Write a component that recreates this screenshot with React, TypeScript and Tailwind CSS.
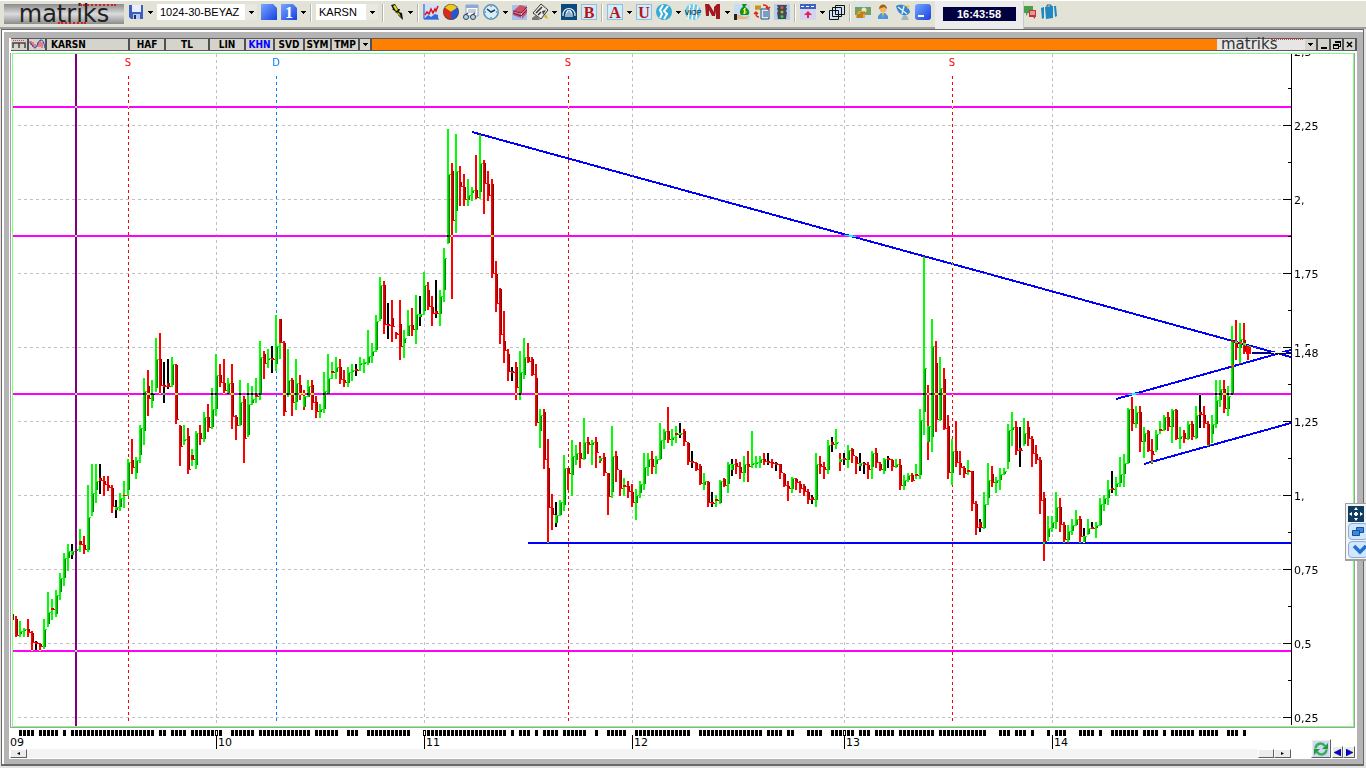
import React from 'react';

type Segment = { start: number; rows: string };

// Weekly bars, 4px apart. Each entry: colour of wick (+ body), high, low, body top, body bottom
const SEGMENTS: Segment[] = [
  {
    start: 16,
    rows: `r 616 637 619 636,g 621 637 631 634,g 628 637 629 631,r 619 637 629 633,r 631 651 633 643,
kr 641 650 642 644,r 643 651 644 647,g 619 649 629 647,g 592 627 612 624,gr 599 620 608 610,
g 590 617 595 614,g 573 600 578 592,g 553 586 558 578,g 544 571 551 558,kg 544 559 551 555,
g 549 551 549 551,gr 529 552 541 545,r 536 554 545 550,g 485 552 517 550,g 464 516 493 512,
g 464 503 481 490,kr 464 494 478 481,r 476 496 481 485,r 476 491 485 488,r 485 513 488 507,
kg 500 518 507 510,g 493 511 498 507,gr 481 508 495 496,g 459 496 462 490,r 439 474 460 468,
g 457 479 460 473,g 425 463 428 455,g 378 445 391 431,r 370 416 386 399,g 380 408 394 401,
g 338 392 359 388,r 333 394 359 386,kr 362 403 385 387,kr 359 389 383 387,g 357 387 364 385,
r 364 424 365 420,r 425 466 426 447,g 425 445 439 441,r 428 474 436 470,gr 449 466 455 460,
g 431 469 433 465,r 425 445 433 439,g 412 442 417 439,r 404 432 417 428,g 388 429 409 427,
g 354 416 375 409,r 364 387 375 383,r 359 394 383 391,g 378 394 383 393,r 364 429 383 417`,
  },
  {
    start: 236,
    rows: `r 415 440 417 426,g 380 426 402 425,r 396 463 399 439,g 383 437 404 435,g 386 405 399 403,
gr 378 403 395 397,g 341 400 357 395,r 351 379 354 364,g 349 368 358 360,kr 346 373 358 360,
g 315 371 346 364,gr 319 359 319 343,r 341 416 343 412,g 349 397 380 395,r 378 416 380 403,
g 359 410 383 402,r 375 400 385 394,rg 390 410 396 407,g 380 397 386 397,r 380 410 385 403,
r 396 418 402 412,g 404 418 409 412,g 372 413 391 409,g 354 394 378 394,gr 362 379 371 373,
g 357 379 367 372,r 359 384 367 380,r 370 387 380 383,g 367 387 372 383,g 364 381 370 372,
kr 364 376 369 371,g 357 371 363 365,g 359 373 362 364,g 330 365 356 363,g 343 363 351 356,
g 315 352 321 350,g 277 321 285 319,r 281 334 285 325,kr 303 339 324 326,r 300 342 318 327,
r 332 339 333 335,r 300 360 324 347,g 330 358 338 343,g 310 336 325 336,r 308 336 325 330,
g 295 344 314 330`,
  },
  {
    start: 420,
    rows: `kg 296 326 314 317,g 272 315 285 311,r 282 310 290 307,r 296 326 307 314,kr 280 318 311 314,
g 290 326 296 314,g 248 302 258 290,g 129 244 174 243,r 163 299 171 221,g 134 233 171 211,
r 166 206 182 187,r 174 206 187 200,g 179 206 195 200,g 187 201 190 193,r 155 199 190 198,
g 134 199 163 192,r 160 214 163 184,r 171 201 184 196,r 179 278 184 274,r 261 312 274 304,
r 288 344 289 335,r 311 363 341 351,r 349 381 354 372,kr 367 381 371 373,r 362 400 367 388,
g 351 400 372 393,g 338 379 357 375,r 343 363 357 362,r 357 376 359 375,r 364 426 378 423,
g 409 448 415 431,r 409 469 412 460,r 439 543 468 508,r 494 530 508 515,kg 502 527 515 523,
g 500 516 502 515,g 455 511 468 505,r 468 490 468 474,g 440 496 456 475,g 445 465 453 460,
r 442 468 453 459,g 418 460 442 459,r 437 454 442 445,g 440 465 442 445,r 437 468 442 453,
rg 456 463 458 461,r 453 476 457 473,r 473 515 473 497,g 426 498 456 492,r 451 482 456 470,
r 470 496 470 489,gr 478 496 485 487,r 481 498 486 492,r 484 507 492 503,g 489 520 495 503`,
  },
  {
    start: 640,
    rows: `g 481 498 484 493,g 453 490 467 484,g 453 476 459 467,r 451 474 459 467,g 456 474 459 464,
g 423 460 440 459,g 429 449 431 440,r 407 443 431 440,g 429 446 437 440,gr 426 443 433 435,
kg 423 438 433 435,r 429 446 431 442,r 442 465 443 462,kr 451 468 461 463,r 462 471 463 470,
r 464 485 466 484,g 473 490 481 485,r 481 507 482 503,kr 492 507 502 504,gr 495 507 499 501,
g 480 504 481 503,r 478 487 479 486,g 462 493 464 484,kg 459 476 464 470,r 459 474 463 467,
r 462 479 467 473,g 456 482 464 473,r 451 482 464 467,g 431 468 463 465,g 456 468 462 464,
g 456 468 459 463,r 453 465 459 462,kr 453 465 461 463,r 459 468 462 464,kr 462 471 463 465,
r 464 479 464 473,r 473 487 474 486,r 481 501 486 489,g 477 493 478 489,r 478 490 479 483,
r 481 493 484 489,r 484 496 486 492,r 489 504 492 500,kr 495 504 497 500,g 453 507 464 500,
r 456 474 464 467,r 462 479 467 470,g 440 474 445 470,kr 437 452 442 445,g 429 449 442 444`,
  },
  {
    start: 840,
    rows: `rg 453 471 459 462,kr 453 465 458 460,g 445 468 450 460,r 448 463 449 456,r 456 474 457 464,
kg 453 471 463 466,kr 462 474 463 465,r 462 479 465 470,g 451 479 453 467,r 448 468 453 463,
r 462 471 464 470,g 458 474 459 471,kr 456 468 458 460,r 459 471 460 467,g 459 468 464 467,
r 459 490 465 486,g 475 490 480 486,g 473 482 475 480,r 473 482 475 481,gr 464 479 474 476,
g 409 479 420 475,g 256 435 368 412,rg 385 460 426 442,g 319 452 346 437,r 341 432 363 420,
g 357 421 388 420,r 368 430 379 429,r 415 479 426 473,g 439 485 451 473,r 421 467 451 463,
r 451 475 463 468,r 466 478 468 474,gr 460 475 470 472,r 471 511 471 504,r 501 535 504 528,
kr 519 532 522 528,g 492 529 504 528,g 463 505 480 498,r 466 487 474 483,g 477 493 480 483,
g 468 490 474 480,g 468 475 471 474,g 424 469 430 462,g 412 446 427 430,r 421 455 427 451,
kr 427 467 448 451,g 418 446 433 444,r 421 446 427 439,r 436 467 439 454,r 445 464 454 460`,
  },
  {
    start: 1040,
    rows: `r 457 514 460 501,r 492 561 498 542,g 516 541 528 537,g 516 532 522 528,g 492 529 507 522,
r 498 532 507 525,r 522 543 525 540,g 525 543 531 540,g 519 535 525 531,g 510 526 519 525,
r 516 543 519 537,kg 528 543 536 542,g 519 535 528 534,kr 522 529 527 529,g 522 538 525 528,
g 498 526 504 525,g 495 511 498 504,g 480 505 489 498,kr 471 493 488 490,g 477 496 483 487,
g 457 487 474 483,g 454 487 463 474,g 408 464 409 463,r 397 431 409 424,g 406 428 412 424,
r 406 452 412 442,g 427 458 433 442,r 430 452 431 451,r 439 464 451 455,g 430 452 434 450,
gr 421 434 429 431,g 415 431 417 430,r 412 431 417 427,g 409 443 410 427,r 409 440 410 439,
g 427 449 436 439,r 430 443 433 439,g 421 440 424 439,r 421 440 424 437,g 406 439 415 438,
kr 394 428 412 415,r 406 428 415 424,r 421 446 424 445,g 415 443 424 434,g 380 428 400 424,
g 380 407 389 400,r 380 413 389 409,g 386 416 396 409,g 326 395 341 394,r 320 360 342 348,
g 323 364 339 348,r 323 354 340 352`,
  },
];

const BARS = SEGMENTS.flatMap(({ start, rows }) =>
  rows.split(',').map((row, i) => {
    const [kind, hi, lo, top, bottom] = row.trim().split(' ');
    return { x: start + i * 4, wick: kind[0], body: kind[kind.length - 1], hi: +hi, lo: +lo, top: +top, bottom: +bottom };
  })
);

const BRIGHT: Record<string, string> = { g: '#00ff00', r: '#ff0000', k: '#000000' };
const MID: Record<string, string> = { g: '#00c800', r: '#d00000', k: '#000000' };
const DARK: Record<string, string> = { g: '#008a00', r: '#900000', k: '#000000' };

const PRICES = ['2,5', '2,25', '2,', '1,75', '1,5', '1,25', '1,', '0,75', '0,5', '0,25'];
const YEARS: [number, string][] = [[216, '10'], [424, '11'], [632, '12'], [844, '13'], [1052, '14']];
const EVENTS: [number, string, string][] = [
  [128, 'S', '#ff0000'],
  [276, 'D', '#0080ff'],
  [568, 'S', '#ff0000'],
  [952, 'S', '#ff0000'],
];

// [first x, count]
const MARKS: [number, number][] = [
  [19, 4], [39, 5], [63, 1], [71, 21], [159, 2], [171, 4], [191, 8], [231, 6], [259, 13], [315, 6], [347, 3],
  [367, 11], [423, 21], [511, 1], [519, 3], [535, 1], [543, 4], [563, 6], [595, 1], [607, 5], [635, 14],
  [699, 16], [767, 4], [787, 2], [807, 4], [831, 6], [859, 3], [875, 5], [899, 9], [939, 12], [999, 3],
  [1015, 3], [1031, 1], [1047, 1], [1055, 3], [1079, 4], [1099, 1], [1111, 7], [1143, 4], [1163, 1],
  [1171, 6], [1199, 5], [1227, 3], [1243, 1],
];

const Chart: React.FC = () => (
  <svg
    viewBox="13 54 1340 672"
    className="block w-full h-auto isolate font-['DejaVu_Sans',sans-serif]"
    shapeRendering="crispEdges"
    role="img"
    aria-label="KARSN"
  >
    <rect x="13" y="54" width="1340" height="672" fill="#fff" />

    {/* Grid */}
    {PRICES.slice(1).map((p, i) => (
      <line key={p} x1="18" x2="1283" y1={125.5 + i * 74} y2={125.5 + i * 74} stroke="#c0c0c0" strokeDasharray="3 3" />
    ))}
    {YEARS.map(([x]) => (
      <line key={x} x1={x + 0.5} x2={x + 0.5} y1="54" y2="724" stroke="#c0c0c0" strokeDasharray="3 3" />
    ))}

    {/* Events */}
    {EVENTS.map(([x, label, color]) => (
      <g key={x}>
        <line x1={x + 0.5} x2={x + 0.5} y1="76" y2="724" stroke={color} strokeDasharray="3 3" />
        <text x={x} y="66" fontSize="10" textAnchor="middle" fill={color}>{label}</text>
      </g>
    ))}

    {/* Bars */}
    <rect x="13" y="614" width="1" height="6" fill="#900000" />
    {BARS.map(({ x, wick, body, hi, lo, top, bottom }) => (
      <g key={x}>
        <rect x={x - 1} y={hi} width="2" height={lo - hi} fill={BRIGHT[wick]} />
        {wick !== body && <rect x={x - 1} y={top} width="1" height={bottom - top} fill={BRIGHT[body]} />}
        <rect x={x} y={top} width="1" height={bottom - top} fill={MID[body]} />
        <rect x={x + 1} y={top} width="1" height={bottom - top} fill={DARK[body]} />
        <rect x={x} y={body === 'g' ? top : bottom - 1} width="3" height="1" fill={BRIGHT[body]} />
      </g>
    ))}
    <rect x="1247" y="345" width="2" height="15" fill="#ff0000" />
    <rect x="1246" y="346" width="5" height="8" fill="#ff0000" />

    {/* Drawn levels and trends, inverted against whatever lies below */}
    {[107, 236, 394, 651].map((y) => (
      <line key={y} className="mix-blend-difference" x1="13" x2="1291" y1={y} y2={y} stroke="#00ff00" strokeWidth="2" />
    ))}
    <line className="mix-blend-difference" x1="76" x2="76" y1="54" y2="726" stroke="#7fff7f" strokeWidth="2" />
    <line className="mix-blend-difference" x1="528" x2="1291" y1="543" y2="543" stroke="#ffff00" strokeWidth="2" />
    <line className="mix-blend-difference" x1="472" y1="132" x2="1291" y2="357" stroke="#ffff00" strokeWidth="2" />
    <line className="mix-blend-difference" x1="1116" y1="399" x2="1291" y2="350" stroke="#ffff00" strokeWidth="2" />
    <line className="mix-blend-difference" x1="1144" y1="464" x2="1291" y2="423" stroke="#ffff00" strokeWidth="2" />
    <line className="mix-blend-difference" x1="1252" y1="353" x2="1291" y2="353" stroke="#ffff7f" strokeWidth="2" />

    {/* Price axis */}
    <line x1="1291.5" x2="1291.5" y1="54" y2="725" stroke="#000" />
    {PRICES.map((p, i) => {
      const y = 51.5 + i * 74;
      return (
        <g key={p}>
          <line x1="1283" x2="1291" y1={y} y2={y} stroke="#000" />
          {i < 9 && <line x1="1288" x2="1291" y1={y + 37} y2={y + 37} stroke="#000" />}
          <text x="1294" y={y + 4} fontSize="11">{p}</text>
        </g>
      );
    })}
    <rect x="1293" y="347" width="30" height="12" fill="#fff" />
    <text x="1294" y="357" fontSize="11">1,48</text>
  </svg>
);

const DateStrip: React.FC = () => (
  <svg viewBox="10 728 1281 21" className="block w-full h-auto font-['DejaVu_Sans',sans-serif]" shapeRendering="crispEdges">
    {MARKS.flatMap(([x, n]) =>
      Array.from({ length: n }, (_, i) => <rect key={x + i * 4} x={x + i * 4} y="730" width="3" height="6" fill="#000" />)
    )}
    <text x="10" y="746" fontSize="11">09</text>
    {YEARS.map(([x, label]) => (
      <g key={x}>
        <rect x={x} y="731" width="1" height="4" fill="#fff" />
        <rect x={x} y="735" width="1" height="14" fill="#000" />
        <text x={x + 2} y="746" fontSize="11">{label}</text>
      </g>
    ))}
  </svg>
);

const Arrow = () => (
  <svg viewBox="0 0 5 3" className="w-[5px] h-[3px] shrink-0" shapeRendering="crispEdges">
    <path d="M0 0h5v1H4v1H3v1H2V2H1V1H0z" />
  </svg>
);

const DropArrow: React.FC<{ label: string }> = ({ label }) => (
  <button aria-label={label} className="w-[5px] h-4 flex items-center justify-center shrink-0">
    <Arrow />
  </button>
);

const Divider = () => <span className="w-[2px] h-[18px] shrink-0 bg-[#b4b4b0] border-r border-white" />;

const Tool: React.FC<{ label: string; children: React.ReactNode }> = ({ label, children }) => (
  <button aria-label={label} className="w-4 h-4 shrink-0">
    <svg viewBox="0 0 16 16" className="block w-4 h-4 overflow-visible">{children}</svg>
  </button>
);

const Combo: React.FC<{ label: string; value: string; className: string }> = ({ label, value, className }) => (
  <span className={`relative flex h-4 shrink-0 bg-white ${className}`}>
    <select
      aria-label={label}
      defaultValue={value}
      className="appearance-none w-full h-4 pl-[3px] pr-3 text-[11px] leading-4 bg-transparent outline-none"
    >
      <option>{value}</option>
    </select>
    <span className="absolute right-0 inset-y-0 w-3 bg-[#e8e8e0] flex items-center justify-center pointer-events-none">
      <Arrow />
    </span>
  </span>
);

const Letter: React.FC<{ children: string }> = ({ children }) => (
  <>
    <rect x=".5" y=".5" width="15" height="15" fill="#d2ecfa" stroke="#8cbfe0" />
    <text x="8" y="14" textAnchor="middle" fontSize="16" fontWeight="bold" fill="#b81418" fontFamily="Liberation Serif, serif">
      {children}
    </text>
  </>
);

const Toolbar: React.FC = () => (
  <header className="h-[27px] bg-[#e2e2d6] border-t border-white flex items-start">
    <div className="flex items-start gap-1 pl-1 pt-[3px] shrink-0">
      <div className="relative w-[120px] h-5 bg-linear-to-b from-[#8c8c8c] via-[#dcdcdc] to-[#8c8c8c] flex items-center justify-center">
        <span className="font-['DejaVu_Sans',sans-serif] text-[24px] leading-5 text-[#222]">matriks</span>
        <span className="absolute top-0 left-[76px] w-9 border-t-2 border-dotted border-[#d02020]" />
        <span className="absolute bottom-0 left-[54px] w-7 border-t-2 border-dotted border-[#d02020]" />
      </div>
      <Tool label="Save">
        <path d="M1 1h14v14H3l-2-2z" fill="#3c5cc0" />
        <path d="M4 1h9v7H4z" fill="#e8f0ff" />
        <path d="M5 10h7v5H5z" fill="#b9c8ee" />
        <path d="M6 11h2v4H6z" fill="#1d2f7a" />
      </Tool>
      <DropArrow label="Save options" />
      <Combo label="Page" value="1024-30-BEYAZ" className="w-[100px]" />
      <Tool label="New page">
        <defs>
          <linearGradient id="blue" x1="0" y1="0" x2="1" y2="1">
            <stop offset="0" stopColor="#78a8ff" />
            <stop offset="1" stopColor="#1440e0" />
          </linearGradient>
        </defs>
        <path d="M0 0h12l4 4v12H0z" fill="url(#blue)" />
      </Tool>
      <Tool label="Page 1">
        <path d="M0 0h12l4 4v12H0z" fill="url(#blue)" />
        <text x="8" y="14" textAnchor="middle" fontSize="16" fontWeight="bold" fill="#fff" fontFamily="Liberation Serif, serif">1</text>
      </Tool>
      <DropArrow label="Pages" />
      <Divider />
      <Combo label="Symbol" value="KARSN" className="w-[62px]" />
      <Divider />
      <Tool label="Quick order">
        <path d="M3 1l4-1 3 5h2l-1 3 3 1 1 7-5-5h1l-4-3h1L4 5h1z" fill="#111" />
        <path d="M5 2l2-1 3 5-2 1zM8 8l3 1 2 4-3-3z" fill="#e8e000" />
      </Tool>
      <DropArrow label="Quick orders" />
      <Divider />
      <Tool label="Chart">
        <path d="M0 0h16v16H0z" fill="#cfe0fa" />
        <path d="M1 0v15h15" fill="none" stroke="#2246c8" />
        <path d="M2 14l3-3 3 2 4-3 3 1v4H2z" fill="#2e6be0" />
        <path d="M2 11l2-3 2 2 2-5 2 4 2-4 1 2 2-5" fill="none" stroke="#e01010" strokeWidth="1.5" />
      </Tool>
      <Tool label="Portfolio">
        <circle cx="8" cy="8" r="8" fill="#445" />
        <path d="M8 8L2 4a7 7 0 0 1 12 0z" fill="#f0c818" />
        <path d="M8 8v7A7 7 0 0 1 2 4z" fill="#e02818" />
        <path d="M8 8l6-4A7 7 0 0 1 8 15z" fill="#2458d0" />
      </Tool>
      <Tool label="Watch list">
        <path d="M3 1h12v11H3z" fill="#fff" stroke="#88a4c8" />
        <path d="M3 1h12v3H3z" fill="#88aadd" />
        <path d="M5 6h8M5 8h8" stroke="#99a" />
        <path d="M1 12l4-3M8 12l4-3" stroke="#456" strokeWidth="1.500" />
        <circle cx="3" cy="13" r="2.500" fill="#b4d4e8" stroke="#345" />
        <circle cx="10" cy="13" r="2.500" fill="#b4d4e8" stroke="#345" />
      </Tool>
      <Tool label="History">
        <circle cx="8" cy="8" r="7.200" fill="#d6eefa" stroke="#5890bc" strokeWidth="1.500" />
        <path d="M4 5l4 3 4-2" fill="none" stroke="#123a60" strokeWidth="1.500" />
        <path d="M8 2v1M8 13v1M2 8h1M13 8h1" stroke="#456" />
      </Tool>
      <DropArrow label="History options" />
      <Tool label="Reports">
        <path d="M0 1h15v15H0z" fill="#a8c0ec" />
        <path d="M1 7l7-6 7 2-6 6zM1 8l8 2v4l-8-3zM10 9l5-5v5l-5 6z" fill="#d05068" />
        <path d="M1 9l8 3 6-6M1 7l8 2 6-6" fill="none" stroke="#782038" />
      </Tool>
      <Tool label="News">
        <path d="M1 9L9 0l7 6-7 9z" fill="#ecece4" stroke="#333" />
        <path d="M4 9l6-6M6 11l3-3" stroke="#333" strokeWidth="1.500" />
        <path d="M10 7l4-1-3 5z" fill="#445" />
        <path d="M12 13l2-3 2 5z" fill="#d8b020" />
        <path d="M0 14l4-3 4 5H0z" fill="#777" />
      </Tool>
      <DropArrow label="News options" />
      <Tool label="Agency">
        <path d="M0 0h16v16H0z" fill="#0d4a7c" />
        <path d="M2 12C1 2 15 2 14 12M5 13c-1-9 7-9 6 0M7 6v7M9 6v7" fill="none" stroke="#e8f4ff" strokeWidth="1.200" />
      </Tool>
      <Tool label="Bulletin"><Letter>B</Letter></Tool>
      <Divider />
      <Tool label="Analysis"><Letter>A</Letter></Tool>
      <DropArrow label="Analysis options" />
      <Tool label="Alerts"><Letter>U</Letter></Tool>
      <Tool label="Exchange">
        <circle cx="8" cy="8" r="8" fill="#35abd8" />
        <path d="M7 1L4 6l2 4-2 4M12 2L8 7l3 3-3 5" fill="none" stroke="#fff" strokeWidth="2" />
      </Tool>
      <DropArrow label="Exchange options" />
      <Tool label="Derivatives">
        <circle cx="8" cy="8" r="8" fill="#6cc8e8" />
        <path d="M5 1L3 15M9 0L7 16M13 2l-2 13" stroke="#fff" strokeWidth="1.500" />
        <text x="8" y="11" textAnchor="middle" fontSize="7" fill="#000" fontFamily="Liberation Sans, sans-serif">VİOP</text>
      </Tool>
      <Tool label="Matriks">
        <path d="M0 0h4l5 8V3l3-3h3v15h-4V7l-1 5H7L4 6v6H1z" fill="#a01820" />
      </Tool>
      <DropArrow label="Matriks options" />
      <Tool label="Funds">
        <path d="M0 0h16v16H0z" fill="#c4dcf4" />
        <path d="M8 0h5l-2 3c5 2 5 7 3 8H7C5 9 6 4 9 3z" fill="#189018" />
        <path d="M12 5c-3-1-3 2-1 2s2 3-2 2M10.500 4v6" fill="none" stroke="#f8f060" />
        <path d="M3 11h4l3 2 6-1-4 3H3z" fill="#eeb478" />
        <path d="M0 10h3v6H0z" fill="#222" />
      </Tool>
      <Tool label="Transfer">
        <path d="M7 5h8v10H7z" fill="#d8ecff" stroke="#224e80" />
        <path d="M9 8h5M9 10h5M9 12h5" stroke="#224e80" />
        <path d="M1 1h6v4H1z" fill="#e8b838" />
        <path d="M1 3h6M1 5h6" stroke="#a87010" />
        <path d="M9 1c3 0 5 1 5 4M12 3l2 2 2-2M5 13C2 13 2 11 2 8M0 10l2-2 2 2" fill="none" stroke="#e02818" strokeWidth="1.500" />
      </Tool>
      <Tool label="Signals">
        <path d="M0 0h16v16H0z" fill="#b8ccf0" />
        <path d="M3 1h10l-1 3h1l-1 4h1l-1 7H4L3 8h1L3 4h1z" fill="#444a50" />
        <circle cx="8" cy="3.500" r="1.500" fill="#d06060" />
        <circle cx="8" cy="8" r="1.500" fill="#b8b048" />
        <circle cx="8" cy="12.500" r="1.500" fill="#38d048" />
      </Tool>
      <Divider />
      <Tool label="Scroll bar">
        <path d="M0 0h16v16H0z" fill="#d4d4ea" />
        <path d="M0 0h16v5H0z" fill="#3d62c0" />
        <path d="M1 2.500h3M6 2.500h3M11 2.500h3" stroke="#fff" />
        <path d="M8 7l4 4H9v3H7v-3H4z" fill="#e02060" />
      </Tool>
      <DropArrow label="Scroll bar options" />
      <Tool label="Windows">
        <path d="M6.500 1.500h9v9h-9zM3.500 3.500h9v9h-9zM.5 6.500h9v9h-9z" fill="#cfe4fa" stroke="#111" />
      </Tool>
      <Divider />
      <Tool label="Cash">
        <path d="M0 0h16v16H0z" fill="#cfe4f2" />
        <path d="M0 3h16v8H0z" fill="#7a9c5c" />
        <circle cx="9" cy="6" r="2.500" fill="#e0ecc8" />
        <path d="M4 7h6v7H1v-3z" fill="#e8a838" />
        <path d="M2 11h6M2 13h6M5 9h5" stroke="#8a5810" />
      </Tool>
      <Tool label="Account">
        <path d="M3 15v-3l3-3h4l3 3v3z" fill="#4a94e0" />
        <circle cx="8" cy="5" r="3.500" fill="#f2b860" />
        <path d="M4 5c0-6 8-6 8 0L9 3z" fill="#a06020" />
        <path d="M7 9h2l-1 5z" fill="#f4c030" />
      </Tool>
      <Tool label="Connection">
        <path d="M1 2C5-1 14 1 15 8c-3 6-12 4-14-6z" fill="#3c84c8" />
        <path d="M3 3l9 7M9 2L7 10" stroke="#d8f0ff" strokeWidth="1.500" />
        <path d="M12 1l3 1-3 3z" fill="#f0d028" />
        <path d="M8 12h4l2 4H6z" fill="#a8b4bc" />
      </Tool>
      <Tool label="Minimize all">
        <rect width="16" height="16" rx="3" fill="url(#blue)" />
        <path d="M3 11h6v2H3z" fill="#fff" />
      </Tool>
    </div>
    <div className="ml-1 w-[89px] h-7 shrink-0 bg-[#ececec] border-r border-[#c8c8c8] flex items-start justify-center pt-[6px]">
      <time className="w-[73px] h-[14px] bg-[#000040] text-white text-[11px] leading-[15px] font-bold text-center">16:43:58</time>
    </div>
    <div className="flex gap-1 pt-[3px]">
      <button aria-label="Messages" className="w-[13px] h-4">
        <svg viewBox="0 0 13 16" className="block w-[13px] h-4">
          <path d="M0 2h9v7H4l-2 3V9H0z" fill="#45a048" />
          <path d="M5 6h7v7h-1v2l-2-2H5z" fill="#c83038" />
          <path d="M6 8h5M6 10h5" stroke="#fff" />
        </svg>
      </button>
      <Tool label="Briefcase">
        <path d="M0 4l3-1v11l-2 1zM4 3l8-1v12l-7 1zM13 2l2 0 1 10-2 1z" fill="#2088c0" />
        <path d="M6 3V1h4v2" fill="none" stroke="#206090" />
      </Tool>
    </div>
  </header>
);

const TAB = 'h-[11px] shrink-0 bg-[#d4d4cc] border-r-2 border-[#505050] text-[10px] leading-[11px] font-bold';

const TitleBar: React.FC = () => (
  <div className="ml-px h-[13px] bg-[#ff8000] border-y border-[#605860] flex font-['DejaVu_Sans_Condensed','DejaVu_Sans',sans-serif]">
    <button aria-label="Menu" className={`${TAB} w-[18px]`}>
      <svg viewBox="0 0 16 11" className="block w-4 h-[11px]">
        <path d="M2 9V4h12v5M8 4v5" fill="none" stroke="#444" strokeWidth="1.500" />
        <path d="M2 1.500h12" stroke="#e04040" strokeDasharray="1 1" />
      </svg>
    </button>
    <button aria-label="Indicators" className={`${TAB} w-[18px]`}>
      <svg viewBox="0 0 16 11" className="block w-4 h-[11px]">
        <path d="M2 2v4M4 3v5M6 5v4M9 3v5M11 1v7M13 3v6" stroke="#f03030" />
        <path d="M0 3c2 0 4 6 6 6s3-8 6-8 3 5 4 8" fill="none" stroke="#1838d8" />
      </svg>
    </button>
    <button className={`${TAB} w-[83px] text-left pl-1`}>KARSN</button>
    <button className={`${TAB} w-9`}>HAF</button>
    <button className={`${TAB} w-11`}>TL</button>
    <button className={`${TAB} w-9`}>LIN</button>
    <button className={`${TAB} w-[29px] text-[#0000ff]`}>KHN</button>
    <button className={`${TAB} w-[30px]`}>SVD</button>
    <button className={`${TAB} w-[27px]`}>SYM</button>
    <button className={`${TAB} w-7`}>TMP</button>
    <button aria-label="More" className={`${TAB} w-3 flex items-center justify-center`}><Arrow /></button>
    <div className="flex-1" />
    <div className="relative w-[88px] h-[11px] bg-[#e6e6e6] font-['DejaVu_Sans',sans-serif] text-[15px] leading-[10px] text-[#333] pl-1">
      matriks
      <span className="absolute top-0 left-[54px] w-8 border-t border-dotted border-[#e04020]" />
    </div>
    <button aria-label="Options" className={`${TAB} w-[13px] flex items-center justify-center`}><Arrow /></button>
    <button aria-label="Minimize" className={`${TAB} w-[13px] flex items-end justify-center pb-px`}>
      <span className="w-[6px] h-[2px] bg-black" />
    </button>
    <button aria-label="Restore" className={`${TAB} w-[13px] flex items-center justify-center`}>
      <svg viewBox="0 0 9 9" className="w-[9px] h-[9px]" shapeRendering="crispEdges">
        <path d="M3 1h5v5H6M3 1v2M3 2h5M1 4h5v4H1zM1 5h5" fill="none" stroke="#000" />
      </svg>
    </button>
    <button aria-label="Close" className={`${TAB} w-[13px] flex items-center justify-center`}>
      <svg viewBox="0 0 7 7" className="w-[7px] h-[7px]">
        <path d="M1 1l5 5M6 1L1 6" stroke="#000" strokeWidth="1.500" />
      </svg>
    </button>
  </div>
);

const RAISED = 'bg-[#ececec] border border-t-white border-l-white border-r-[#606060] border-b-[#606060] flex items-center justify-center';

const Footer: React.FC = () => (
  <div className="flex pr-[2px] bg-white">
    <div className="flex-1">
      <DateStrip />
      <div className="h-[9px] mb-px bg-[#f4f4f4] flex">
        <button aria-label="Scroll left" className={`${RAISED} w-[17px]`}>
          <svg viewBox="0 0 3 3" className="w-[3px] h-[3px]"><path d="M3 0v3L0 1.500z" /></svg>
        </button>
        <div className="flex-1" />
        <button aria-label="Scroll thumb" className={`${RAISED} w-4`} />
        <button aria-label="Scroll right" className={`${RAISED} w-[17px]`}>
          <svg viewBox="0 0 3 3" className="w-[3px] h-[3px]"><path d="M0 0v3l3-1.500z" /></svg>
        </button>
      </div>
    </div>
    <div className="w-16 flex items-end justify-end pb-px">
      <button aria-label="Refresh" className={`${RAISED} w-5 h-[19px] mr-px`}>
        <svg viewBox="0 0 16 16" className="w-4 h-4">
          <path d="M0 0h16v16H0z" fill="#ccd8fa" />
          <path d="M2.500 7.500C3 2 9 1 12 5M13.500 8.500C13 14 7 15 4 11" fill="none" stroke="#3cb050" strokeWidth="2.500" />
          <path d="M15 2v6H9zM1 14V8h6z" fill="#249a38" />
        </svg>
      </button>
      <button aria-label="Previous" className={`${RAISED} w-[11px] h-3`}>
        <svg viewBox="0 0 7 7" className="w-[7px] h-[7px]"><path d="M7 0v7L0 3.500z" fill="#0000f0" stroke="#000" strokeWidth=".5" /></svg>
      </button>
      <button aria-label="Next" className={`${RAISED} w-3 h-3`}>
        <svg viewBox="0 0 7 7" className="w-[7px] h-[7px]"><path d="M0 0v7l7-3.500z" fill="#0000f0" stroke="#000" strokeWidth=".5" /></svg>
      </button>
    </div>
  </div>
);

const SideDock: React.FC = () => (
  <aside className="absolute right-0 top-[503px] w-[21px] h-[58px] pl-[2px] pt-[2px] bg-[#f4f4f4] border-l border-t border-b-2 border-[#a0a0a0] overflow-hidden flex flex-col gap-px">
    <button aria-label="Move" className="w-4 h-4 bg-[#103c60]">
      <svg viewBox="0 0 16 16" className="block w-4 h-4">
        <path d="M8 1l2 3H6zM8 15l2-3H6zM1 8l3-2v4zM15 8l-3-2v4zM7 6h2v1h1v2H9v1H7V9H6V7h1z" fill="#fff" />
      </svg>
    </button>
    <button aria-label="Cascade" className="w-5 h-[17px] bg-[#d4e6fc] border border-[#88aede] rounded-sm">
      <svg viewBox="0 0 18 15" className="block w-[18px] h-[15px]">
        <path d="M7.500 3.500h7v5h-7z" fill="#3c88e0" stroke="#1450a0" />
        <path d="M3.500 6.500h7v5h-7z" fill="#3c88e0" stroke="#1450a0" />
      </svg>
    </button>
    <button aria-label="Collapse" className="w-5 h-[17px] bg-[#d4e6fc] border border-[#88aede] rounded-sm">
      <svg viewBox="0 0 18 15" className="block w-[18px] h-[15px]">
        <path d="M5 4l6 6 6-6" fill="none" stroke="#1e70d8" strokeWidth="3.500" />
      </svg>
    </button>
  </aside>
);

export default function App() {
  return (
    <div className="relative w-full min-h-screen overflow-hidden bg-[#e2e2e2] text-black font-['Liberation_Sans',Arial,sans-serif]">
      <Toolbar />
      <main className="border-t-2 border-[#a0a0a0] pl-px pr-[2px] pb-[2px]">
        <div className="border border-b-2 border-[#696969]">
          <div className="border-t-2 border-l-2 border-white bg-[#b4b4b4] pt-[6px] pb-[5px] pl-[5px] pr-[6px]">
            <div className="bg-white border-l border-white">
              <TitleBar />
              <div className="pt-[2px] pr-[2px]">
                <div className="border-l border-r border-b border-[#a0a0a0] pl-px">
                  <div className="border border-[#80ff80]">
                    <Chart />
                  </div>
                </div>
              </div>
              <Footer />
            </div>
          </div>
        </div>
      </main>
      <SideDock />
    </div>
  );
}
